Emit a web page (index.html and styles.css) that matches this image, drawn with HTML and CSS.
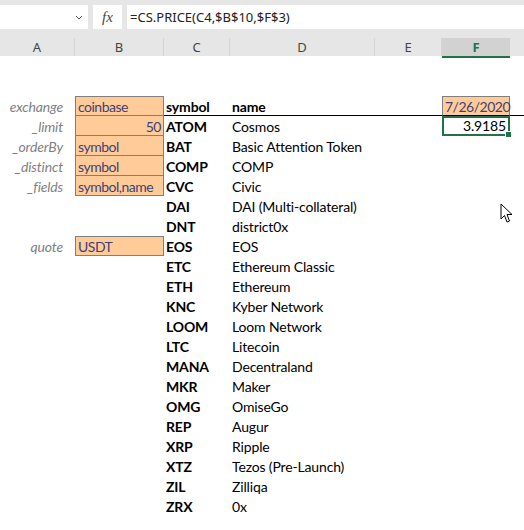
FILE: index.html
```html
<!DOCTYPE html>
<html lang="en">
<head>
  <meta charset="UTF-8">
  <title>Sheet</title>
  <link rel="stylesheet" href="styles.css">
</head>
<body>
  <div class="formula-bar">
    <div class="name-box">
      <svg class="chevron" width="8" height="5" viewBox="0 0 8 5"><path d="M1 1 L4 4 L7 1" fill="none" stroke="#555" stroke-width="1"/></svg>
    </div>
    <div class="fx-box"><span class="fx">fx</span></div>
    <div class="formula">=CS.PRICE(C4,$B$10,$F$3)</div>
  </div>

  <div class="col-headers">
    <div class="col">A</div>
    <div class="col">B</div>
    <div class="col">C</div>
    <div class="col">D</div>
    <div class="col">E</div>
    <div class="col active">F</div>
    <div class="col rest"></div>
  </div>

  <div class="sheet" id="sheet"></div>

  <svg class="cursor" width="14" height="22" viewBox="0 0 14 22">
    <path d="M1 1 L1 16 L4.5 12.5 L7 19 L9.5 18 L7 11.5 L12 11.5 Z" fill="#fff" stroke="#000" stroke-width="1" stroke-linejoin="round"/>
  </svg>

  <script>
    const labels = { 3: "exchange", 4: "_limit", 5: "_orderBy", 6: "_distinct", 7: "_fields", 10: "quote" };
    const inputs = { 3: "coinbase", 4: "50", 5: "symbol", 6: "symbol", 7: "symbol,name", 10: "USDT" };
    const coins = [
      ["ATOM", "Cosmos"], ["BAT", "Basic Attention Token"], ["COMP", "COMP"], ["CVC", "Civic"],
      ["DAI", "DAI (Multi-collateral)"], ["DNT", "district0x"], ["EOS", "EOS"], ["ETC", "Ethereum Classic"],
      ["ETH", "Ethereum"], ["KNC", "Kyber Network"], ["LOOM", "Loom Network"], ["LTC", "Litecoin"],
      ["MANA", "Decentraland"], ["MKR", "Maker"], ["OMG", "OmiseGo"], ["REP", "Augur"],
      ["XRP", "Ripple"], ["XTZ", "Tezos (Pre-Launch)"], ["ZIL", "Zilliqa"], ["ZRX", "0x"]
    ];

    const sheet = document.getElementById("sheet");
    function cell(text, cls) {
      const el = document.createElement("div");
      el.className = "cell " + (cls || "");
      el.textContent = text || "";
      sheet.appendChild(el);
    }

    for (let r = 1; r <= 23; r++) {
      cell(labels[r], "label");
      if (inputs[r]) cell(inputs[r], "input" + (r === 4 ? " num" : "") + (r >= 4 && r <= 7 ? " joined" : ""));
      else cell("");
      const coin = coins[r - 4];
      if (r === 3) {
        cell("symbol", "bold head");
        cell("name", "bold head");
        cell("", "head");
        cell("7/26/2020", "input num head");
        cell("", "head");
      } else if (coin) {
        cell(coin[0], "bold");
        cell(coin[1]);
        cell("");
        cell(r === 4 ? "3.9185" : "", r === 4 ? "num selected" : "");
        cell("");
      } else {
        cell(""); cell(""); cell(""); cell(""); cell("");
      }
    }
  </script>
</body>
</html>
```

FILE: styles.css
```css
* {
  box-sizing: border-box;
}

body {
  margin: 0;
  background: #fff;
  font-family: Lato, "Liberation Sans", sans-serif;
  overflow: hidden;
  position: relative;
  height: 530px;
}

.formula-bar {
  display: flex;
  gap: 5px;
  height: 30px;
  padding: 5px 0 1px 0;
  background: #e6e6e6;
}

.name-box {
  width: 88px;
  background: #fff;
  display: flex;
  justify-content: flex-end;
  align-items: center;
  padding-right: 5px;
}

.fx-box {
  width: 29px;
  background: #fff;
  display: flex;
  align-items: center;
  justify-content: center;
}

.fx {
  font-family: "Liberation Serif", serif;
  font-style: italic;
  font-size: 15px;
  color: #444;
}

.formula {
  flex: 1;
  background: #fff;
  font-family: "Noto Sans", sans-serif;
  font-size: 13px;
  color: #222;
  display: flex;
  align-items: center;
  padding-left: 3px;
}

.col-headers {
  display: grid;
  grid-template-columns: 75px 89px 66px 145px 67px 68px 1fr;
  height: 26px;
  padding-top: 6px;
  background: #e6e6e6;
}

.col {
  font-family: "Noto Sans", sans-serif;
  font-size: 13px;
  color: #444;
  text-align: center;
  line-height: 18px;
  border-right: 1px solid #d4d4d4;
  margin: 2px 0;
}

.col.active {
  background: #d2d2d2;
  color: #217346;
  font-weight: bold;
  margin: 2px 0 0 0;
  border-bottom: 2px solid #217346;
  border-right: none;
}

.col.rest {
  border-right: none;
}

.sheet {
  display: grid;
  grid-template-columns: 75px 89px 66px 145px 67px 68px 1fr;
  grid-auto-rows: 20px;
}

.cell {
  font-size: 14px;
  line-height: 18px;
  padding: 2px 2px 0 2px;
  white-space: nowrap;
  color: #000;
  letter-spacing: -0.15px;
}

.label {
  text-align: right;
  font-style: italic;
  color: #7f7f7f;
  padding-right: 12px;
}

.input {
  background: #ffcc99;
  border: 1px solid #7f7f7f;
  color: #3f3f76;
  padding-top: 1px;
  line-height: 17px;
  letter-spacing: -0.5px;
}

.joined {
  border-top: none;
  padding-top: 2px;
}

.num {
  text-align: right;
}

.bold {
  font-weight: bold;
}

.head {
  border-bottom: 1px solid #000;
}

.selected {
  border: 2px solid #217346;
  padding-top: 0;
  line-height: 16px;
  position: relative;
}

.selected::after {
  content: "";
  position: absolute;
  right: -4px;
  bottom: -4px;
  width: 5px;
  height: 5px;
  background: #217346;
  border: 1px solid #fff;
}

.cursor {
  position: absolute;
  left: 500px;
  top: 203px;
}
```
